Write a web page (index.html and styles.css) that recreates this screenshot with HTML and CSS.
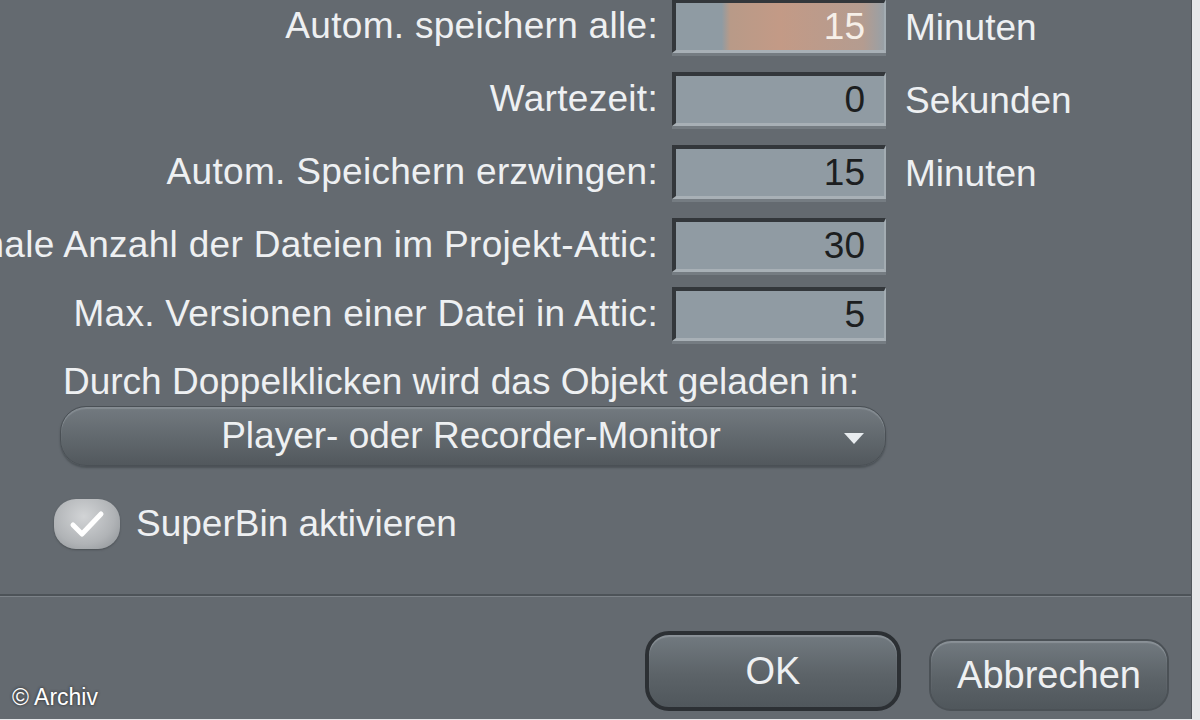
FILE: index.html
```html
<!DOCTYPE html>
<html lang="de">
<head>
  <meta charset="UTF-8">
  <title>Einstellungen</title>
  <link rel="stylesheet" href="styles.css">
</head>
<body>

  <div class="dialog">
    <div class="fields">
      <label class="label"><span>Autom. speichern alle:</span></label>
      <div class="input active"><span>15</span></div>
      <span class="unit">Minuten</span>

      <label class="label"><span>Wartezeit:</span></label>
      <div class="input"><span>0</span></div>
      <span class="unit">Sekunden</span>

      <label class="label"><span>Autom. Speichern erzwingen:</span></label>
      <div class="input"><span>15</span></div>
      <span class="unit">Minuten</span>

      <label class="label"><span>Maximale Anzahl der Dateien im Projekt-Attic:</span></label>
      <div class="input"><span>30</span></div>
      <span class="unit"></span>

      <label class="label"><span>Max. Versionen einer Datei in Attic:</span></label>
      <div class="input"><span>5</span></div>
      <span class="unit"></span>
    </div>

    <div class="load-in">
      <div class="caption">Durch Doppelklicken wird das Objekt geladen in:</div>
      <div class="select">
        <span>Player- oder Recorder-Monitor</span>
        <svg class="arrow" width="22" height="14" viewBox="0 0 22 14">
          <path d="M1 2 L21 2 L11 13 Z" fill="#e8ecef"/>
        </svg>
      </div>
    </div>

    <div class="check-row">
      <span class="check">
        <svg width="40" height="32" viewBox="0 0 40 32">
          <path d="M6 17 L15 26 L34 6" fill="none" stroke="#fff" stroke-width="5" stroke-linecap="round" stroke-linejoin="round"/>
        </svg>
      </span>
      <span class="check-text">SuperBin aktivieren</span>
    </div>

    <div class="footer">
      <button class="btn default">OK</button>
      <button class="btn">Abbrechen</button>
    </div>
  </div>

  <div class="credit">© Archiv</div>

</body>
</html>
```

FILE: styles.css
```css
body {
  margin: 0;
  background: #e6e8ea;
  color: #eef0f2;
  font-family: "Liberation Sans", Arial, sans-serif;
  width: 1200px;
  height: 720px;
  overflow: hidden;
  position: relative;
}

.dialog {
  height: 720px;
  width: 1191px;
  background: #646a70;
  border-right: 1px solid #50565b;
}

/* settings grid */
.fields {
  display: grid;
  grid-template-columns: 658px 214px 1fr;
  column-gap: 14px;
  row-gap: 15px;
  margin-top: -1px;
}

.label {
  display: flex;
  justify-content: flex-end;
  overflow: hidden;
  white-space: nowrap;
  font-size: 37px;
  letter-spacing: 0.3px;
  line-height: 54px;
}

.input {
  height: 54px;
  box-sizing: border-box;
  background: #909ba3;
  border-top: 4px solid #33373b;
  border-left: 4px solid #33373b;
  border-right: 2px solid #a3acb2;
  border-bottom: 3px solid #a8b0b6;
  box-shadow: 0 3px 0 #757c82;
  text-align: right;
  padding-right: 19px;
  font-size: 37px;
  line-height: 48px;
  color: #1c1e20;
}

.input.active {
  background: linear-gradient(90deg, #8f9ba3 0%, #8f9ba3 22%, #b89a88 26%, #c39a86 50%, #b49c90 90%, #98a0a6 100%);
  color: #f6efe8;
}

.unit {
  font-size: 37px;
  line-height: 58px;
  padding-left: 5px;
}

/* double click target */
.load-in {
  padding: 17px 0 0 60px;
  width: 826px;
}

.caption {
  font-size: 37px;
  padding-left: 3px;
  line-height: 48px;
}

.select {
  position: relative;
  height: 60px;
  box-sizing: border-box;
  border-radius: 26px;
  background: linear-gradient(#737a80, #5f666b 60%, #52585d);
  border: 1px solid #4a5055;
  box-shadow: inset 0 2px 1px #858c92, 0 2px 2px #4c5257;
  display: flex;
  align-items: center;
  justify-content: center;
  font-size: 37px;
}

.select span {
  margin-left: -4px;
}

.arrow {
  position: absolute;
  right: 20px;
  top: 24px;
}

/* checkbox */
.check-row {
  display: flex;
  align-items: center;
  gap: 16px;
  padding: 33px 0 0 54px;
}

.check {
  width: 66px;
  height: 50px;
  border-radius: 22px;
  background: radial-gradient(ellipse at 45% 35%, #d2d4d6, #b0b3b6 60%, #8a8f93);
  display: flex;
  align-items: center;
  justify-content: center;
  box-shadow: 0 1px 2px #4a4f53;
}

.check-text {
  font-size: 37px;
}

/* buttons */
.footer {
  margin-top: 45px;
  border-top: 2px solid #4d5358;
  box-shadow: inset 0 1px 0 #7c8288;
  height: 130px;
  display: flex;
  align-items: flex-start;
  padding: 35px 0 0 645px;
  gap: 28px;
  box-sizing: border-box;
}

.btn {
  font-family: "Liberation Sans", Arial, sans-serif;
  font-size: 38px;
  color: #eef0f2;
  border-radius: 22px;
  background: linear-gradient(#727a80, #5c6368 55%, #50575c);
  border: 2px solid #4b5156;
  box-shadow: inset 0 2px 1px #8a9197;
  height: 72px;
  margin-top: 8px;
  width: 240px;
  padding: 0;
}

.btn.default {
  width: 256px;
  height: 80px;
  margin-top: 0;
  border: 4px solid #2c3034;
  border-radius: 24px;
}

.credit {
  position: absolute;
  left: 12px;
  top: 684px;
  font-size: 23px;
  color: #fff;
  text-shadow: 0 0 3px #222;
}
```
